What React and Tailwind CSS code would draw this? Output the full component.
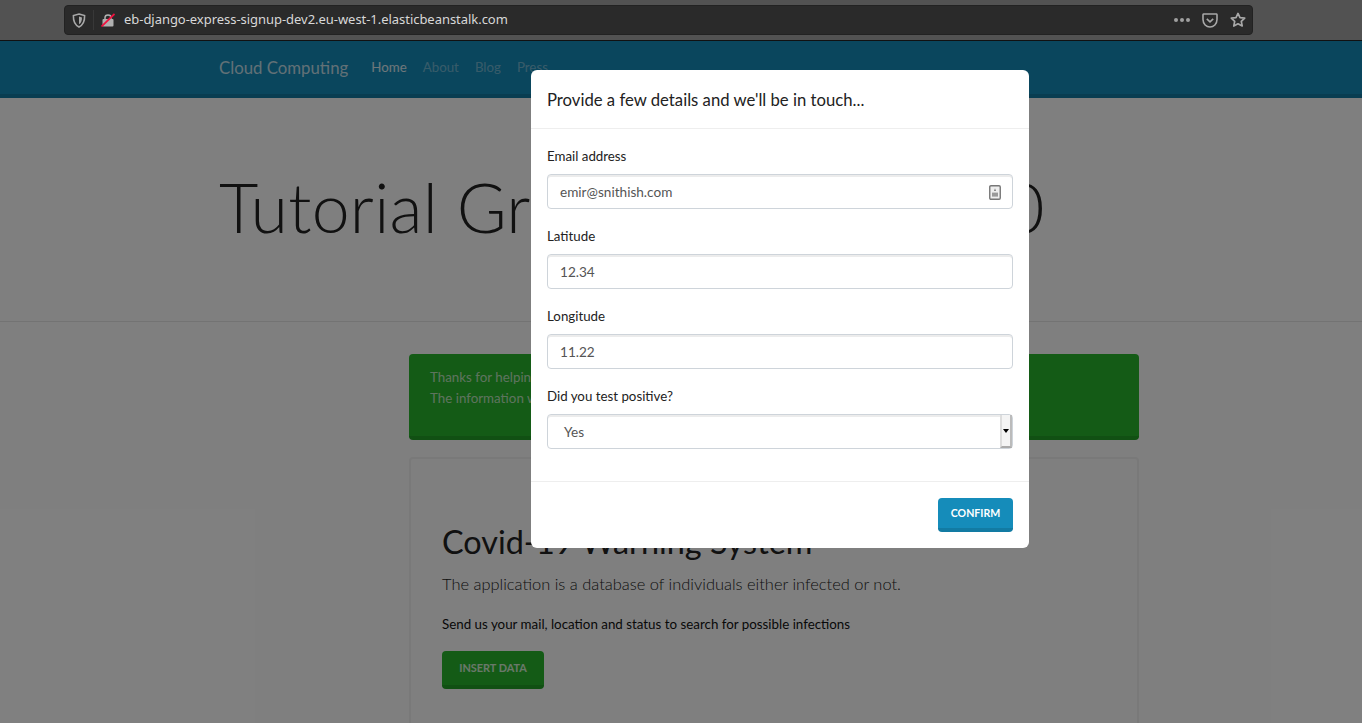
const Field = ({ label, value, children }) => (
  <div className="mb-[17px]">
    <label className="block text-[13.3px] leading-[20px] mb-[8px] text-[#222]">{label}</label>
    <div className="flex items-center h-[35px] rounded-[4px] border border-[#ced4da] shadow-[inset_0_2px_0_rgba(0,0,0,0.075)] pl-[12px] pr-[11px] pt-[1px] text-[13.6px] text-[#555]">
      <span className="flex-1">{value}</span>
      {children}
    </div>
  </div>
);

const ContactIcon = () => (
  <svg width="12" height="15" viewBox="0 0 12 15">
    <rect x="0.75" y="0.75" width="10.5" height="13.5" rx="1.2" fill="#eee" stroke="#777" strokeWidth="1.4" />
    <path d="M6 3.2 L7 6 H5 Z" fill="#777" />
    <rect x="3" y="7.6" width="6" height="4" fill="#999" />
  </svg>
);

const BrowserBar = () => (
  <div className="h-[41px] bg-[#525252] border-b border-[#111] flex items-start pt-[5px] pl-[64px] pr-[109px]">
    <div className="flex-1 h-[30px] bg-[#2a2a2a] rounded-[4px] border border-[#222] flex items-center text-[#d8d8d8] font-['Noto_Sans',sans-serif]">
      <svg width="14" height="15" viewBox="0 0 14 15" className="ml-[7px]" fill="none">
        <path d="M7 1 L12.6 2.6 C12.8 8 11 12 7 14 C3 12 1.2 8 1.4 2.6 Z" stroke="#a8a8a8" strokeWidth="1.6" />
        <path d="M7 3.6 L10 4.4 C10 7.6 9 10 7 11.2 Z" fill="#a8a8a8" />
      </svg>
      <div className="w-px h-[20px] bg-[#383838] ml-[7px]" />
      <svg width="14" height="14" viewBox="0 0 14 14" className="ml-[7px]">
        <path d="M4 6 V4.5 C4 1 10 1 10 4.5 V6" fill="none" stroke="#b0b0b0" strokeWidth="1.5" />
        <rect x="1.5" y="6" width="11" height="7.5" rx="1" fill="#b0b0b0" />
        <path d="M0.5 13.5 L13.5 1" stroke="#f0123f" strokeWidth="1.8" />
      </svg>
      <span className="ml-[9px] text-[13px] tracking-[-0.04px]">eb-django-express-signup-dev2.eu-west-1.elasticbeanstalk.com</span>
      <div className="flex-1" />
      <div className="flex gap-[2px] mr-[12px]">
        <span className="w-[4px] h-[4px] rounded-full bg-[#a0a0a0]" />
        <span className="w-[4px] h-[4px] rounded-full bg-[#a0a0a0]" />
        <span className="w-[4px] h-[4px] rounded-full bg-[#a0a0a0]" />
      </div>
      <svg width="16" height="15" viewBox="0 0 16 15" fill="none" className="mr-[12px]">
        <path d="M1.6 1 H14.4 A0.8 0.8 0 0 1 15 1.8 V6.6 C15 11 11.6 14 8 14 C4.4 14 1 11 1 6.6 V1.8 A0.8 0.8 0 0 1 1.6 1 Z" stroke="#a8a8a8" strokeWidth="1.6" />
        <path d="M4.8 5.8 L8 8.8 L11.2 5.8" stroke="#a8a8a8" strokeWidth="1.6" />
      </svg>
      <svg width="16" height="16" viewBox="0 0 16 16" fill="none" className="mr-[6px]">
        <path d="M8 1.4 L10 5.6 L14.7 6.2 L11.3 9.4 L12.2 14 L8 11.8 L3.8 14 L4.7 9.4 L1.3 6.2 L6 5.6 Z" stroke="#a8a8a8" strokeWidth="1.7" strokeLinejoin="round" />
      </svg>
    </div>
  </div>
);

export default function App() {
  return (
    <div className="h-screen overflow-hidden bg-white flex flex-col font-['Lato',sans-serif]">
      <BrowserBar />

      <div className="relative flex-1 overflow-hidden">
        {/* Page behind the modal */}
        <nav className="h-[57px] bg-[#158cba] border-b-[4px] border-[#127ba3] pt-[1px] flex items-center pl-[219px] text-[13.3px]">
          <span className="text-[16.8px] text-white/75 mr-[23px]">Cloud Computing</span>
          <span className="text-white/85 mr-[16px]">Home</span>
          <span className="text-white/40 mr-[16px]">About</span>
          <span className="text-white/40 mr-[16px]">Blog</span>
          <span className="text-white/40">Press</span>
        </nav>

        <div className="h-[224px] border-b border-[#e7e7e7] pl-[219px] pb-[6px] flex items-center">
          <h1 className="text-[68px] font-light whitespace-nowrap tracking-[0.25px] text-[#222]">Tutorial Group Project 2020</h1>
        </div>

        <div className="w-[730px] ml-[409px] mt-[32px]">
          <div className="h-[86px] bg-[#28b62c] border-b-[4px] border-[#23a127] rounded-[4px] px-[21px] pt-[13px] text-[13.35px] leading-[21px] text-white/70">
            <p>Thanks for helping us keep track of the spread.</p>
            <p>The information will be added to the database.</p>
          </div>

          <div className="mt-[17px] border-2 border-[#f2f2f2] rounded-[4px] px-[31px] pt-[62px] h-[320px]">
            <h2 className="text-[32.4px] leading-[42px] text-[#222]">Covid-19 Warning System</h2>
            <p className="text-[16.45px] font-light leading-[25px] mt-[9px] text-[#222]">The application is a database of individuals either infected or not.</p>
            <p className="text-[13.35px] leading-[21px] mt-[17px] text-[#111]">Send us your mail, location and status to search for possible infections</p>
            <button className="mt-[16px] w-[102px] h-[38px] rounded-[4px] bg-[#28b62c] border-b-[4px] border-[#23a127] text-white/80 text-[10.9px] font-bold">INSERT DATA</button>
          </div>
        </div>

        {/* Backdrop */}
        <div className="absolute inset-0 bg-black/50" />

        {/* Modal */}
        <div className="absolute left-[531px] top-[29px] w-[498px] h-[478px] bg-white rounded-[6px] flex flex-col">
          <div className="h-[59px] border-b border-[#eee] pt-[4px] flex items-center px-[16px] text-[16.7px] text-[#222]">
            Provide a few details and we'll be in touch...
          </div>
          <div className="flex-1 px-[16px] pt-[17px]">
            <Field label="Email address" value="emir@snithish.com"><ContactIcon /></Field>
            <Field label="Latitude" value="12.34" />
            <Field label="Longitude" value="11.22" />
            <div>
              <label className="block text-[13.3px] leading-[20px] mb-[8px] text-[#222]">Did you test positive?</label>
              <div className="flex h-[35px] rounded-[4px] border border-[#ced4da] shadow-[inset_0_2px_0_rgba(0,0,0,0.075)] pl-[16px] text-[13.6px] text-[#555]">
                <span className="flex-1 self-center pt-[1px]">Yes</span>
                <div className="w-[12px] bg-[#f4f4f4] border-l-2 border-[#ddd] border-b-2 border-b-[#aaa] border-r-2 border-r-[#bbb] flex items-center justify-center">
                  <span className="w-0 h-0 border-x-[3px] border-x-transparent border-t-[4px] border-t-black" />
                </div>
              </div>
            </div>
          </div>
          <div className="h-[67px] border-t border-[#eee] flex items-center justify-end px-[16px]">
            <button className="w-[75px] h-[34px] rounded-[4px] bg-[#158cba] border-b-[4px] border-[#127ba3] pt-[1px] text-white text-[10.6px] font-bold">CONFIRM</button>
          </div>
        </div>
      </div>
    </div>
  );
}
